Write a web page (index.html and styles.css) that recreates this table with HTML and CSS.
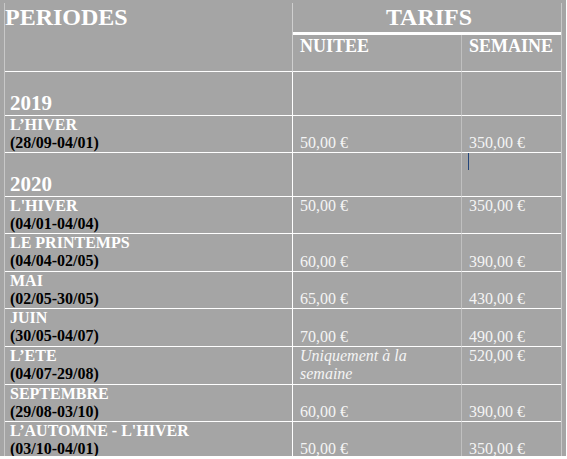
FILE: index.html
```html
<!DOCTYPE html>
<html lang="fr">
<head>
<meta charset="utf-8">
<title>Tarifs</title>
<link rel="stylesheet" href="styles.css">
</head>
<body>
<div class="page">
  <table class="tarifs">
    <colgroup><col class="c1"><col class="c2"><col class="c3"></colgroup>
    <thead>
      <tr class="h1">
        <th class="periodes" rowspan="2">PERIODES</th>
        <th class="tarifs-h" colspan="2">TARIFS</th>
      </tr>
      <tr class="h2">
        <th class="sub nuitee">NUITEE</th>
        <th class="sub">SEMAINE</th>
      </tr>
    </thead>
    <tbody>
      <tr class="year h44">
        <td class="p">2019</td><td class="n"></td><td class="s"></td>
      </tr>
      <tr class="h37">
        <td class="p"><span class="name">L’HIVER</span><span class="date">(28/09-04/01)</span></td>
        <td class="n bottom">50,00 €</td><td class="s bottom">350,00 €</td>
      </tr>
      <tr class="year h44">
        <td class="p">2020</td><td class="n"></td><td class="s"><span class="cursor"></span></td>
      </tr>
      <tr class="h37">
        <td class="p"><span class="name">L'HIVER</span><span class="date">(04/01-04/04)</span></td>
        <td class="n">50,00 €</td><td class="s">350,00 €</td>
      </tr>
      <tr class="h38">
        <td class="p"><span class="name">LE PRINTEMPS</span><span class="date">(04/04-02/05)</span></td>
        <td class="n bottom">60,00 €</td><td class="s bottom">390,00 €</td>
      </tr>
      <tr class="h37">
        <td class="p"><span class="name">MAI</span><span class="date">(02/05-30/05)</span></td>
        <td class="n bottom">65,00 €</td><td class="s bottom">430,00 €</td>
      </tr>
      <tr class="h38">
        <td class="p"><span class="name">JUIN</span><span class="date">(30/05-04/07)</span></td>
        <td class="n bottom">70,00 €</td><td class="s bottom">490,00 €</td>
      </tr>
      <tr class="h38">
        <td class="p"><span class="name">L’ETE</span><span class="date">(04/07-29/08)</span></td>
        <td class="n"><em class="only">Uniquement à la<br>semaine</em></td><td class="s">520,00 €</td>
      </tr>
      <tr class="h37">
        <td class="p"><span class="name">SEPTEMBRE</span><span class="date">(29/08-03/10)</span></td>
        <td class="n bottom">60,00 €</td><td class="s bottom">390,00 €</td>
      </tr>
      <tr class="h35 last">
        <td class="p"><span class="name">L’AUTOMNE - L'HIVER</span><span class="date">(03/10-04/01)</span></td>
        <td class="n bottom">50,00 €</td><td class="s bottom">350,00 €</td>
      </tr>
    </tbody>
  </table>
</div>
</body>
</html>
```
FILE: styles.css
```css
html, body {
  margin: 0;
  padding: 0;
  background: #ffffff;
}

.page {
  box-sizing: border-box;
  width: 566px;
  height: 456px;
  padding: 3px 0 0 4px;
  background: #a5a5a5;
  overflow: hidden;
}

.tarifs {
  border-collapse: separate;
  border-spacing: 0;
  table-layout: fixed;
  width: 558px;
  border-left: 1px solid #c8c8c8;
  border-right: 1px solid #c8c8c8;
  font-family: "Liberation Serif", "Times New Roman", serif;
  color: #ffffff;
}

.c1 { width: 288px; }
.c2 { width: 169px; }
.c3 { width: 99px; }

.tarifs th,
.tarifs td {
  padding: 0;
  text-align: left;
  vertical-align: top;
}

.h1 { height: 32px; }
.h2 { height: 37px; }
.h44 { height: 44px; }
.h38 { height: 38px; }
.h37 { height: 37px; }
.h35 { height: 35px; }

.periodes,
.tarifs-h {
  font-size: 24px;
  line-height: 28px;
  font-weight: bold;
  padding-top: 1px;
}

.periodes {
  padding-left: 5px;
  border-right: 1px solid #cfcfcf;
  border-bottom: 1px solid #ffffff;
}

.tarifs .tarifs-h {
  text-align: center;
  padding-left: 4px;
  border-bottom: 3px solid #ffffff;
}

.sub {
  font-size: 18px;
  line-height: 21px;
  font-weight: bold;
  padding-top: 1px;
  padding-left: 7px;
  border-bottom: 1px solid #ffffff;
}

.tarifs .sub { padding-left: 7px; padding-top: 1px; }

.nuitee {
  border-right: 1px solid #c0c0c0;
}

.tarifs td {
  font-size: 16px;
  line-height: 18px;
  border-bottom: 1px solid #ffffff;
}

.tarifs td.p {
  padding-left: 5px;
  border-right: 1px solid #ffffff;
}

.tarifs td.n {
  padding-left: 7px;
  border-right: 1px solid #c0c0c0;
  color: #f4f4f4;
}

.tarifs td.s {
  padding-left: 7px;
  color: #f4f4f4;
}

.tarifs td.bottom {
  vertical-align: bottom;
}

.tarifs .year td.p {
  font-size: 21px;
  line-height: 24px;
  font-weight: bold;
  color: #ffffff;
  vertical-align: bottom;
}

.name {
  display: block;
  font-weight: bold;
  color: #ffffff;
}

.date {
  display: block;
  font-weight: bold;
  color: #000000;
}

.only {
  font-style: italic;
  color: #f4f4f4;
}

.cursor {
  display: inline-block;
  width: 1px;
  height: 17px;
  margin-left: -1px;
  vertical-align: top;
  background: #24467a;
}

.tarifs tr.last td {
  border-bottom: none;
}
```
